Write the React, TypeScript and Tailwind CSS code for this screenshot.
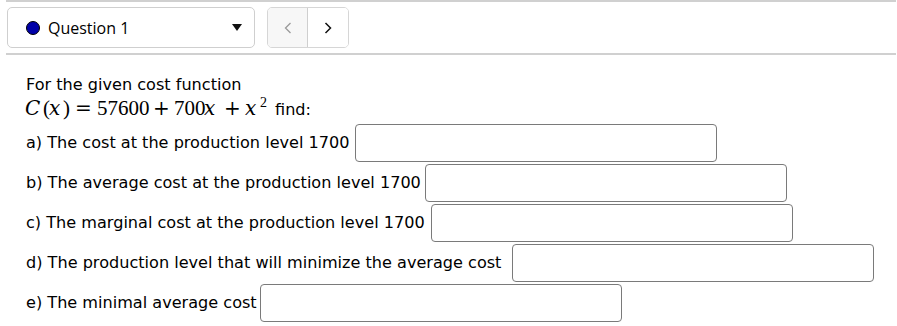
import React from "react";

const rows = [
  { label: "a) The cost at the production level 1700", w: "w-[325px]" },
  { label: "b) The average cost at the production level 1700", w: "w-[395px]" },
  { label: "c) The marginal cost at the production level 1700", w: "w-[401px]" },
  { label: "d) The production level that will minimize the average cost", w: "w-[482px]" },
  { label: "e) The minimal average cost", w: "w-[230px]" },
];

const serif = { fontFamily: '"Liberation Serif", serif' };
const op = { fontFamily: '"DejaVu Serif", serif' };

export default function App() {
  return (
    <div className="w-[897px] h-[326px] bg-white overflow-hidden text-black" style={{ fontFamily: '"DejaVu Sans", sans-serif' }}>
      <div className="ml-[6px] w-[890px] h-[55px] border-t-2 border-b-2 border-[#d0d0d0] flex items-start pt-[5px] pl-[1px]">
        <div className="w-[248px] h-[41px] border border-[#cfcfcf] rounded-[5px] flex items-center pl-[18px] pr-[12px]">
          <span className="w-[14px] h-[14px] rounded-full bg-[#0000a8] border border-black shrink-0" />
          <span className="ml-[8px] text-[16px]" style={{ fontFamily: '"Open Sans", sans-serif' }}>Question 1</span>
          <svg className="ml-auto" width="10" height="7" viewBox="0 0 10 7"><path d="M0 0 L10 0 L5 7 Z" fill="#111" /></svg>
        </div>
        <div className="ml-[12px] w-[82px] h-[41px] border border-[#d6d6d6] rounded-[5px] flex overflow-hidden">
          <div className="w-[40px] h-full bg-[#f7f7f7] border-r border-[#cfcfcf] flex items-center justify-center">
            <svg width="8" height="12" viewBox="0 0 8 12"><path d="M6.5 1 L1.5 6 L6.5 11" fill="none" stroke="#9a9a9a" strokeWidth="1.3" /></svg>
          </div>
          <div className="flex-1 h-full bg-white flex items-center justify-center">
            <svg width="8" height="12" viewBox="0 0 8 12"><path d="M1.5 1 L6.5 6 L1.5 11" fill="none" stroke="#111" strokeWidth="1.5" /></svg>
          </div>
        </div>
      </div>
      <div className="pl-[25px] pt-[19px] text-[16.1px] leading-[22px]">
        <div className="pl-[1px]">For the given cost function</div>
        <div className="flex items-baseline h-[24px] whitespace-nowrap">
          <span className="text-[21px] leading-[24px] flex items-baseline" style={serif}>
            <i className="inline-block w-[18px] text-[20px]" style={op}>C</i>
            <span className="inline-block w-[6px]">(</span>
            <i className="inline-block w-[14px] text-[20px]" style={op}>x</i>
            <span className="inline-block w-[12px]">)</span>
            <span className="inline-block w-[22px] text-[20px]" style={op}>=</span>
            <span className="inline-block w-[56px]">57600</span>
            <span className="inline-block w-[21px] text-[20px]" style={op}>+</span>
            <span className="inline-block w-[30px]">700</span>
            <i className="inline-block w-[20px] text-[20px]" style={op}>x</i>
            <span className="inline-block w-[21px] text-[20px]" style={op}>+</span>
            <i className="inline-block w-[15px] text-[20px]" style={op}>x</i>
            <span className="inline-block w-[15px] text-[14px] relative top-[-8px]">2</span>
          </span>
          <span>find:</span>
        </div>
        <div className="mt-[4px] flex flex-col gap-[2px] pl-[1px]">
          {rows.map((r, i) => (
            <div key={i} className="flex items-center h-[38px]">
              <span className={"whitespace-nowrap " + r.w}>{r.label}</span>
              <div className="ml-[4px] w-[362px] h-[38px] border border-[#7a7a7a] rounded-[4px] bg-white" />
            </div>
          ))}
        </div>
      </div>
    </div>
  );
}
